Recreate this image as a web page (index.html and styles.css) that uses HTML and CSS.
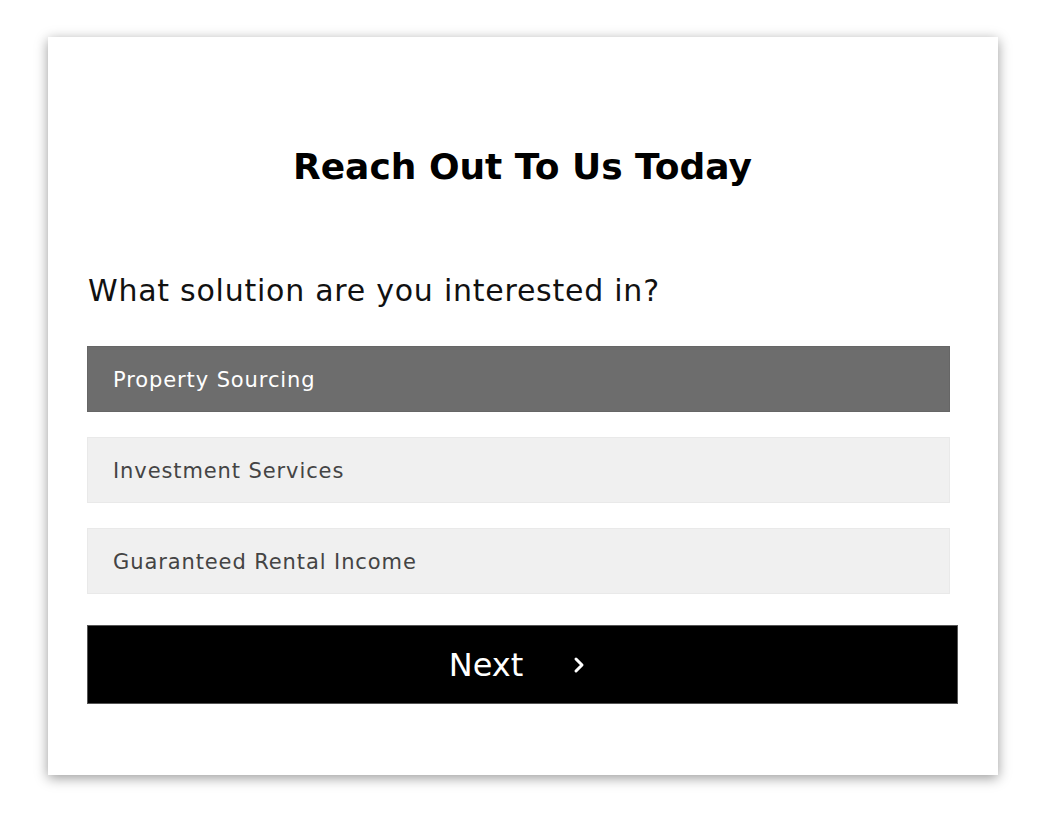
FILE: index.html
```html
<!DOCTYPE html>
<html lang="en">
<head>
    <meta charset="UTF-8">
    <meta name="viewport" content="width=device-width, initial-scale=1.0">
    <title>Reach Out To Us Today</title>
    <link rel="stylesheet" href="styles.css">
</head>
<body>
    <div class="form-card">
        <h1>Reach Out To Us Today</h1>
        <p class="question">What solution are you interested in?</p>

        <div class="options">
            <div class="option selected">Property Sourcing</div>
            <div class="option">Investment Services</div>
            <div class="option">Guaranteed Rental Income</div>
        </div>

        <button class="next-button">
            <span>Next</span>
            <svg class="chevron" width="12" height="18" viewBox="0 0 12 18">
                <path d="M3 3 L9 9 L3 15" fill="none" stroke="#fff" stroke-width="3" stroke-linecap="round" stroke-linejoin="round"/>
            </svg>
        </button>
    </div>
</body>
</html>
```

FILE: styles.css
```css
body {
    margin: 0;
    padding-bottom: 41px;
    background-color: #fff;
    font-family: "DejaVu Sans", "Open Sans", sans-serif;
}

.form-card {
    width: 950px;
    height: 738px;
    box-sizing: border-box;
    margin: 37px 0 0 48px;
    padding: 109px 40px 0 39px;
    background-color: #fff;
    box-shadow: 0 3px 12px rgba(0, 0, 0, 0.4);
}

h1 {
    margin: 0;
    text-align: center;
    font-size: 36px;
    font-weight: bold;
    color: #000;
}

.question {
    margin: 86px 0 0 1px;
    font-size: 30px;
    letter-spacing: 0.75px;
    color: #111;
}

.options {
    display: flex;
    flex-direction: column;
    gap: 25px;
    width: 863px;
    margin-top: 38px;
}

.option {
    height: 66px;
    display: flex;
    align-items: center;
    padding: 2px 0 0 25px;
    background-color: #f0f0f0;
    border: 1px solid #e9e9e9;
    box-sizing: border-box;
    font-size: 21px;
    letter-spacing: 0.9px;
    color: #444;
}

.option.selected {
    background-color: #6d6d6d;
    border-color: #666;
    color: #fff;
}

.next-button {
    display: flex;
    justify-content: center;
    align-items: center;
    gap: 50px;
    width: 871px;
    height: 79px;
    margin-top: 31px;
    padding: 0 11px 0 0;
    background-color: #000;
    border: 1px solid #555;
    color: #fff;
    font-family: inherit;
    font-size: 32px;
    cursor: pointer;
}
```
